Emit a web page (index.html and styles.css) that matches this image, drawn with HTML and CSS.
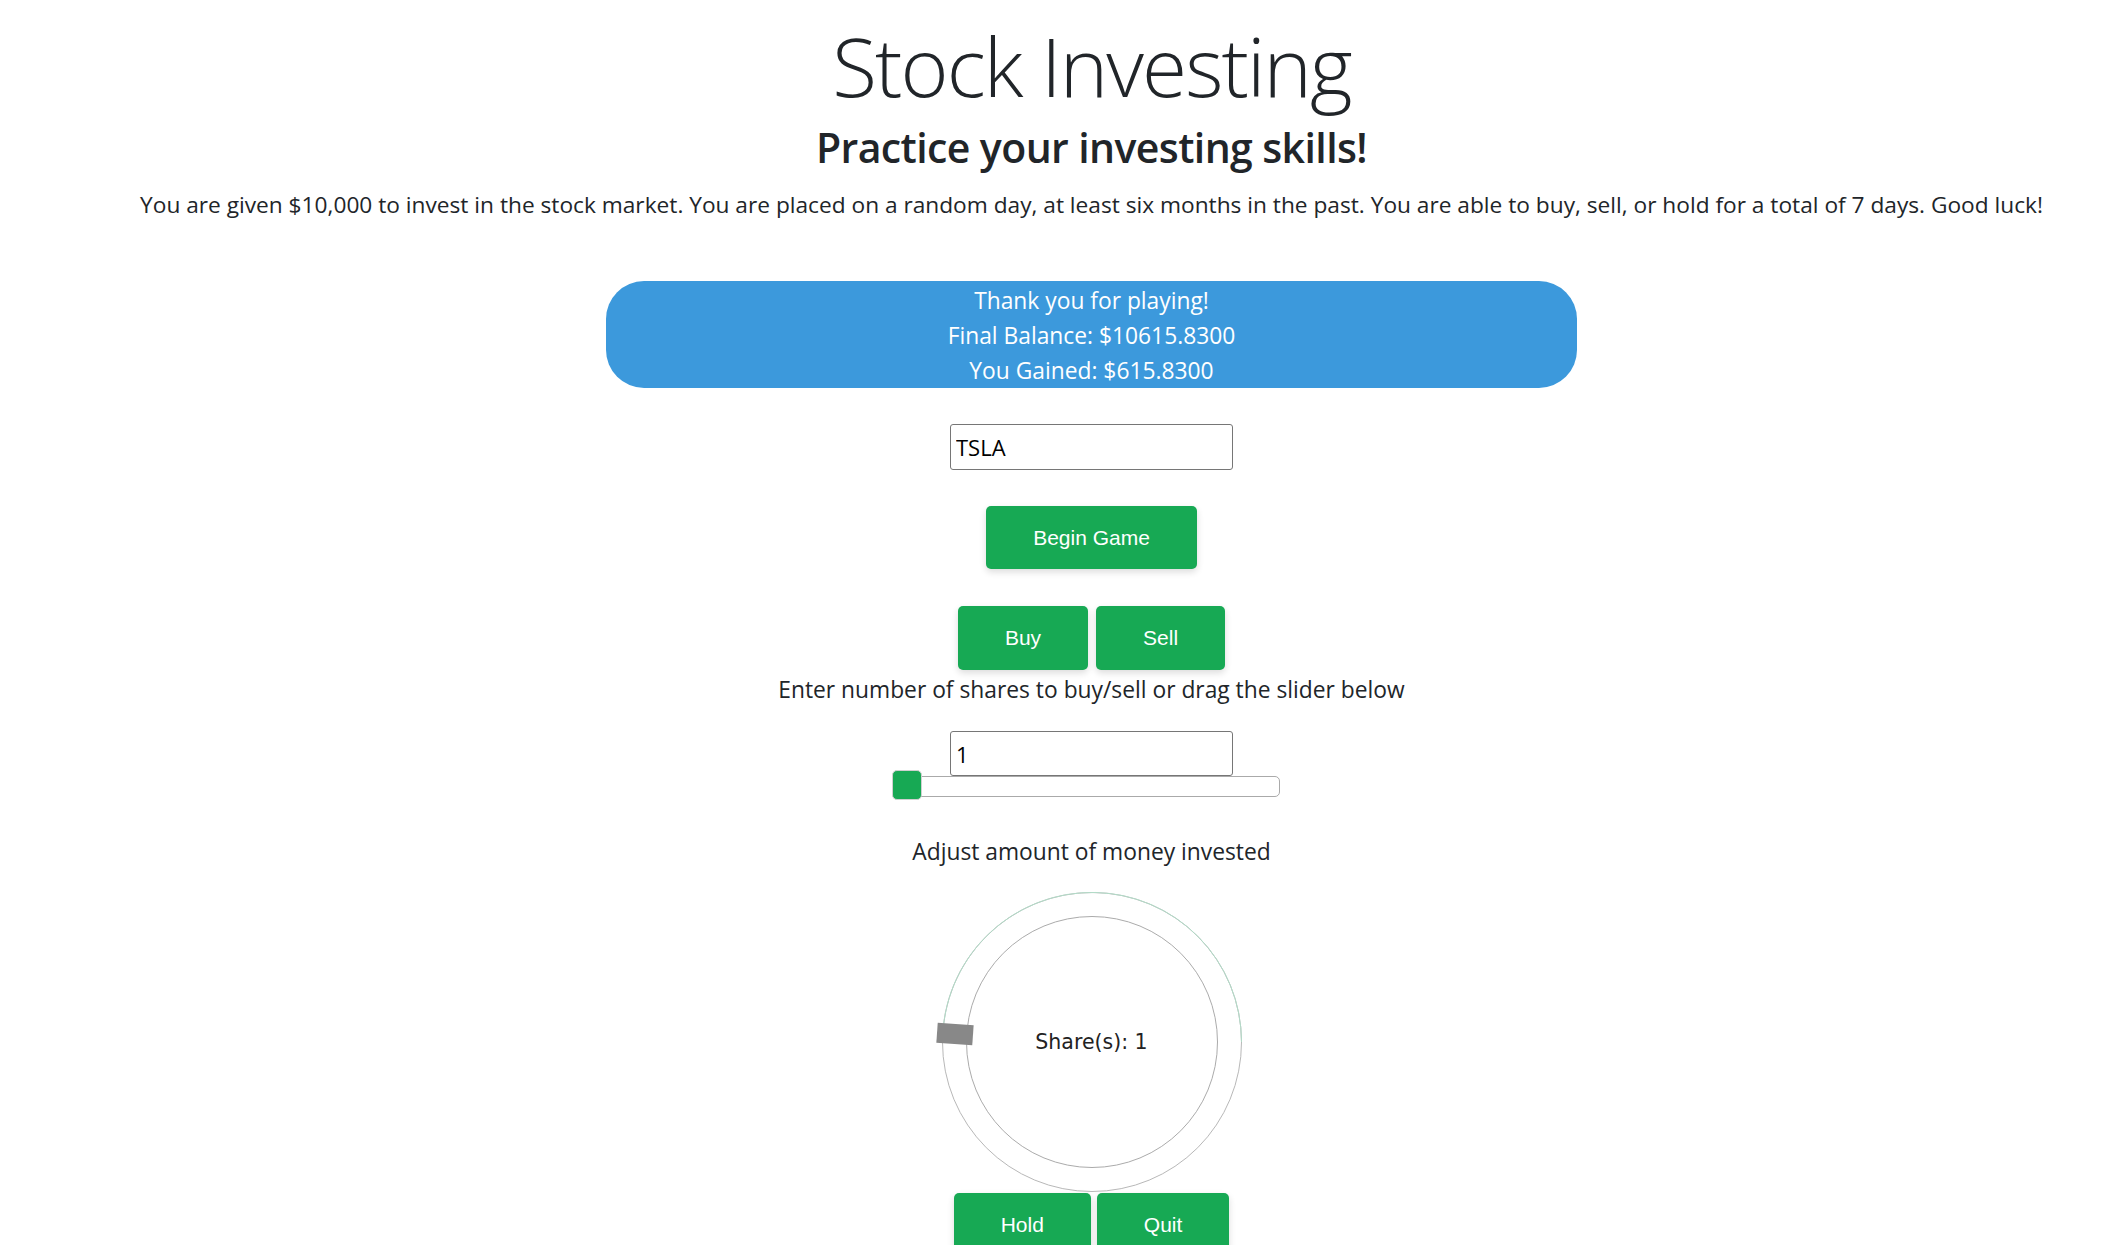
FILE: index.html
```html
<!DOCTYPE html>
<html lang="en">
<head>
<meta charset="utf-8">
<title>Stock Investing</title>
<link rel="stylesheet" href="styles.css">
</head>
<body>
<main class="page">
  <h1 class="title">Stock Investing</h1>
  <h2 class="subtitle">Practice your investing skills!</h2>
  <p class="intro">You are given $10,000 to invest in the stock market. You are placed on a random day, at least six months in the past. You are able to buy, sell, or hold for a total of 7 days. Good luck!</p>

  <div class="result">
    <p class="result-line">Thank you for playing!</p>
    <p class="result-line">Final Balance: $10615.8300</p>
    <p class="result-line">You Gained: $615.8300</p>
  </div>

  <input class="field field-ticker" type="text" value="TSLA">

  <div class="btn-row btn-row-begin">
    <button class="btn">Begin Game</button>
  </div>

  <div class="btn-row btn-row-trade">
    <button class="btn">Buy</button>
    <button class="btn">Sell</button>
  </div>

  <p class="hint">Enter number of shares to buy/sell or drag the slider below</p>

  <input class="field field-shares" type="text" value="1">

  <div class="slider-wrap">
    <div class="track"><div class="thumb"></div></div>
  </div>

  <p class="hint hint-adjust">Adjust amount of money invested</p>

  <div class="dial">
    <svg class="dial-svg" viewBox="0 0 300 300" width="300" height="300">
      <circle cx="150" cy="150" r="149.5" fill="none" stroke="#b8b8b8" stroke-width="1"/>
      <path d="M 0.71 142 A 149.5 149.5 0 0 1 299.5 150" fill="none" stroke="#b2dcc8" stroke-width="1"/>
      <circle cx="150" cy="150" r="125.5" fill="none" stroke="#ababab" stroke-width="1"/>
    </svg>
    <div class="dial-handle"></div>
    <div class="dial-label">Share(s): 1</div>
  </div>

  <div class="btn-row btn-row-end">
    <button class="btn">Hold</button>
    <button class="btn">Quit</button>
  </div>
</main>
</body>
</html>
```

FILE: styles.css
```css
html, body {
  margin: 0;
  padding: 0;
  background: #ffffff;
}

body {
  font-family: "Segoe UI", "Open Sans", "Noto Sans", sans-serif;
  color: #212529;
}

.page {
  padding-left: 57px;
  text-align: center;
}

.title {
  margin: 15px 0 0;
  font-size: 82px;
  font-weight: 300;
  line-height: 100px;
  letter-spacing: -1.9px;
}

.subtitle {
  margin: 8px 0 0;
  font-size: 41px;
  font-weight: 600;
  line-height: 48px;
  letter-spacing: -0.6px;
}

.intro {
  margin: 18px 0 0;
  font-size: 22.7px;
  line-height: 32px;
}

.result {
  box-sizing: border-box;
  width: 971px;
  height: 107px;
  margin: 60px auto 0;
  padding-top: 2px;
  background: #3c99dc;
  color: #ffffff;
  border-radius: 38px;
  font-size: 22.8px;
  line-height: 35px;
}

.result-line {
  margin: 0;
}

.field {
  display: block;
  box-sizing: border-box;
  width: 283px;
  height: 46px;
  margin: 36px auto 0;
  padding: 0 5px;
  border: 1px solid #767676;
  border-radius: 3px;
  background: #ffffff;
  font-family: "Segoe UI", "Open Sans", sans-serif;
  font-size: 22px;
  color: #000000;
  text-align: left;
}

.field-shares {
  height: 45px;
  margin-top: 23px;
}

.btn-row {
  display: flex;
  justify-content: center;
  gap: 8px;
}

.btn-row-begin {
  margin-top: 36px;
}

.btn-row-trade {
  margin-top: 37px;
}

.btn-row-end {
  margin-top: 1px;
  gap: 6px;
}

.btn {
  height: 64px;
  padding: 0 47px;
  border: none;
  border-radius: 5px;
  background: #17a954;
  color: #ffffff;
  font-family: "Liberation Sans", Arial, sans-serif;
  font-size: 21px;
  box-shadow: 0 3px 7px rgba(0, 0, 0, 0.14);
}

.btn-row-begin .btn {
  height: 63px;
}

.hint {
  margin: 2px 0 0;
  font-size: 22.8px;
  line-height: 36px;
}

.hint-adjust {
  margin-top: 37px;
}

.slider-wrap {
  display: flex;
  justify-content: center;
}

.track {
  position: relative;
  box-sizing: border-box;
  width: 388px;
  height: 21px;
  margin-right: 12px;
  border: 1px solid #aaaaaa;
  border-radius: 5px;
  background: #ffffff;
}

.thumb {
  position: absolute;
  left: -1px;
  top: -7px;
  box-sizing: border-box;
  width: 30px;
  height: 30px;
  background: #17a954;
  border: 1px solid #d0d0d0;
  border-radius: 5px;
}

.dial {
  position: relative;
  width: 300px;
  height: 300px;
  margin: 22px auto 0;
}

.dial-svg {
  position: absolute;
  left: 0;
  top: 0;
  overflow: visible;
}

.dial-handle {
  position: absolute;
  left: -5px;
  top: 132px;
  width: 36px;
  height: 20px;
  background: #888888;
  transform: rotate(4deg);
}

.dial-label {
  position: absolute;
  inset: 0;
  display: flex;
  align-items: center;
  justify-content: center;
  font-family: "DejaVu Sans", Verdana, sans-serif;
  font-size: 20.5px;
  color: #222222;
}
```
